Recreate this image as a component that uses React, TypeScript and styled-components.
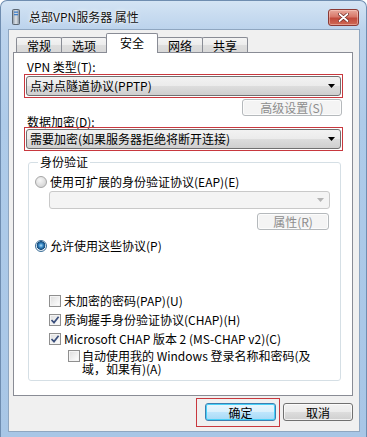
import React from 'react'
import styled, {createGlobalStyle} from 'styled-components'

const GlobalStyle = createGlobalStyle`
    html, body {
        margin: 0;
        padding: 0;
        background: #ffffff;
    }
    body {
        font-family: "Noto Sans CJK SC", "Noto Sans", sans-serif;
        font-size: 12px;
        color: #000000;
    }
`

const Window = styled.div`
    width: 367px;
    height: 437px;
    box-sizing: border-box;
    display: flex;
    flex-direction: column;
    border: 1px solid #6f8db0;
    border-bottom: none;
    border-radius: 7px 7px 0 0;
    background: linear-gradient(180deg, #d4e4f4 0px, #bcd3ec 28px, #aecbe9 120px, #a8c6e6 100%);
    overflow: hidden;
`

const TitleBar = styled.div`
    height: 28px;
    box-sizing: border-box;
    padding: 4px 7px 0 11px;
    display: flex;
    align-items: center;
    flex-shrink: 0;
`

const TitleText = styled.div`
    margin-left: 9px;
    font-size: 12px;
    line-height: 14px;
    color: #111111;
    text-shadow: 0 0 5px rgba(255, 255, 255, 0.95), 0 0 2px rgba(255, 255, 255, 0.9);
`

const CloseButton = styled.div`
    margin-left: auto;
    width: 31px;
    height: 17px;
    box-sizing: border-box;
    border: 1px solid #8a3a35;
    border-radius: 3px;
    background: linear-gradient(180deg, #e9a99c 0%, #d8786a 45%, #c14a3c 55%, #cf6a55 100%);
    display: flex;
    align-items: center;
    justify-content: center;
    box-shadow: inset 0 0 0 1px rgba(255, 220, 210, 0.45);
`

const Client = styled.div`
    flex: 1;
    margin: 0 6px 5px 7px;
    box-sizing: border-box;
    border: 1px solid #8fa6c0;
    background: #f0f0f0;
    padding: 3px 6px 0 4px;
    display: flex;
    flex-direction: column;
`

const TabStrip = styled.div`
    display: flex;
    align-items: flex-end;
    height: 19px;
    padding-left: 3px;
`

const Tab = styled.div<{ $active?: boolean }>`
    box-sizing: border-box;
    width: ${p => (p.$active ? 52 : 46)}px;
    height: ${p => (p.$active ? 20 : 15)}px;
    margin-right: -1px;
    margin-bottom: ${p => (p.$active ? -1 : 0)}px;
    border: 1px solid #898c95;
    border-bottom: none;
    border-radius: 2px 2px 0 0;
    background: ${p => (p.$active
        ? '#ffffff'
        : 'linear-gradient(180deg, #f4f4f4 0%, #ececec 50%, #dedede 51%, #d8d8d8 100%)')};
    display: flex;
    align-items: center;
    justify-content: center;
    padding-bottom: ${p => (p.$active ? 2 : 0)}px;
    line-height: 13px;
    position: relative;
    z-index: ${p => (p.$active ? 2 : 1)};
`

const Panel = styled.div`
    box-sizing: border-box;
    border: 1px solid #898c95;
    background: #ffffff;
    padding: 0 9px 14px 10px;
    display: flex;
    flex-direction: column;
`

const FieldLabel = styled.div<{ $lineHeight: number; $top: number }>`
    margin: ${p => p.$top}px 0 0 3px;
    line-height: ${p => p.$lineHeight}px;
`

const Highlight = styled.div<{ $top: number }>`
    margin-top: ${p => p.$top}px;
    border: 1px solid #c8383e;
    padding: 1px;
`

const Combo = styled.div<{ $disabled?: boolean }>`
    box-sizing: border-box;
    height: ${p => (p.$disabled ? 18 : 20)}px;
    border: 1px solid ${p => (p.$disabled ? '#c9c9c9' : '#707070')};
    border-radius: 3px;
    background: ${p => (p.$disabled
        ? '#f4f4f4'
        : 'linear-gradient(180deg, #f2f2f2 0%, #ebebeb 50%, #dddddd 51%, #cfcfcf 100%)')};
    display: flex;
    align-items: center;
    padding: 0 5px 0 3px;
`

const ComboText = styled.div`
    flex: 1;
    line-height: 14px;
    white-space: nowrap;
`

const ButtonRow = styled.div<{ $top: number }>`
    display: flex;
    justify-content: flex-end;
    margin-top: ${p => p.$top}px;
    padding-right: 1px;
`

const PushButton = styled.div<{ $width: number; $height: number; $disabled?: boolean; $default?: boolean }>`
    box-sizing: border-box;
    width: ${p => p.$width}px;
    height: ${p => p.$height}px;
    border: 1px solid ${p => (p.$disabled ? '#b5b9bc' : p.$default ? '#3c7fb1' : '#707070')};
    border-radius: 3px;
    background: ${p => (p.$disabled
        ? '#f4f4f4'
        : p.$default
            ? 'linear-gradient(180deg, #eaf6fd 0%, #d9f0fc 50%, #bee6fd 51%, #a7d9f5 100%)'
            : 'linear-gradient(180deg, #f2f2f2 0%, #ebebeb 50%, #dddddd 51%, #cfcfcf 100%)')};
    box-shadow: ${p => (p.$default ? 'inset 0 0 0 1px #48d0f8' : 'inset 0 0 0 1px rgba(255,255,255,0.7)')};
    color: ${p => (p.$disabled ? '#8d8d8d' : '#000000')};
    display: flex;
    align-items: center;
    justify-content: center;
    line-height: 13px;
`

const GroupBox = styled.fieldset`
    margin: 4px 2px 0 4px;
    border: 1px solid #d5dfe5;
    border-radius: 3px;
    padding: 0 10px 5px 6px;
    min-width: 0;
`

const Legend = styled.legend`
    padding: 0 2px;
    margin-left: 3px;
    line-height: 14px;
`

const OptionRow = styled.div<{ $top: number; $indent?: number }>`
    display: flex;
    align-items: flex-start;
    margin-top: ${p => p.$top}px;
    margin-left: ${p => p.$indent || 0}px;
`

const OptionText = styled.div<{ $gap: number }>`
    margin-left: ${p => p.$gap}px;
    line-height: 14px;
    white-space: nowrap;
`

const WrapText = styled.div`
    margin-left: 2px;
    line-height: 13px;
    white-space: nowrap;
`

const Radio = styled.div<{ $checked?: boolean }>`
    width: 12px;
    height: 12px;
    margin-top: 1px;
    box-sizing: border-box;
    border-radius: 50%;
    border: 1px solid ${p => (p.$checked ? '#3d6f98' : '#a6a6a6')};
    background: ${p => (p.$checked
        ? 'radial-gradient(circle at 50% 45%, #b6e0f8 0px, #3a8bc8 2px, #13497a 4px, #e6eef5 4.6px, #f4f4f4 100%)'
        : 'radial-gradient(circle at 40% 35%, #f8f8f8 0px, #dcdcdc 60%, #cacaca 100%)')};
    flex-shrink: 0;
`

const CheckBox = styled.div`
    width: 12px;
    height: 12px;
    margin-top: 1px;
    box-sizing: border-box;
    border: 1px solid #8f8f8f;
    background: linear-gradient(135deg, #dcdcdc 0%, #f2f2f2 60%, #ffffff 100%);
    box-shadow: inset 0 0 0 1px #f4f4f4;
    display: flex;
    align-items: center;
    justify-content: center;
    flex-shrink: 0;
`

const Footer = styled.div`
    display: flex;
    justify-content: flex-end;
    align-items: flex-start;
    margin-top: 2px;
`

const FooterMark = styled.div`
    border: 1px solid #c8383e;
    padding: 4px 3px 5px 8px;
    margin-right: 3px;
`

const FooterPlain = styled.div`
    padding-top: 5px;
`

const DropArrow = (props: { color: string }) => (
    <svg width="7" height="4" viewBox="0 0 7 4">
        <polygon points="0,0 7,0 3.5,4" fill={props.color}/>
    </svg>
)

const Check = () => (
    <svg width="10" height="10" viewBox="0 0 10 10">
        <path d="M1.5 5 L4 7.6 L8.6 1.8" fill="none" stroke="#3b4f7c" strokeWidth="1.7"/>
    </svg>
)

const ServerIcon = () => (
    <svg width="8" height="16" viewBox="0 0 8 16">
        <defs>
            <linearGradient id="tower" x1="0" x2="1" y1="0" y2="0">
                <stop offset="0" stopColor="#8c97a3"/>
                <stop offset="0.5" stopColor="#dfe5ea"/>
                <stop offset="1" stopColor="#7d8894"/>
            </linearGradient>
        </defs>
        <rect x="0.5" y="0.5" width="7" height="15" rx="1" fill="url(#tower)" stroke="#5c6772"/>
        <rect x="2" y="2.5" width="4" height="1.3" fill="#3f7fc9"/>
        <rect x="2" y="5" width="4" height="1.3" fill="#3f7fc9"/>
    </svg>
)

const CloseGlyph = () => (
    <svg width="11" height="9" viewBox="0 0 11 9">
        <path d="M1.5 1 L9.5 8 M9.5 1 L1.5 8" stroke="#6b2620" strokeWidth="3.2" strokeLinecap="round"/>
        <path d="M1.5 1 L9.5 8 M9.5 1 L1.5 8" stroke="#ffffff" strokeWidth="1.8" strokeLinecap="round"/>
    </svg>
)

const tabs = ['常规', '选项', '安全', '网络', '共享']

const App = () => {
    return (
        <>
            <GlobalStyle/>
            <Window>
                <TitleBar>
                    <ServerIcon/>
                    <TitleText>总部VPN服务器 属性</TitleText>
                    <CloseButton>
                        <CloseGlyph/>
                    </CloseButton>
                </TitleBar>
                <Client>
                    <TabStrip>
                        {tabs.map(t => (
                            <Tab key={t} $active={t === '安全'}>{t}</Tab>
                        ))}
                    </TabStrip>
                    <Panel>
                        <FieldLabel $top={7} $lineHeight={14}>VPN 类型(T):</FieldLabel>
                        <Highlight $top={0}>
                            <Combo>
                                <ComboText>点对点隧道协议(PPTP)</ComboText>
                                <DropArrow color="#000000"/>
                            </Combo>
                        </Highlight>
                        <ButtonRow $top={1}>
                            <PushButton $width={100} $height={17} $disabled>高级设置(S)</PushButton>
                        </ButtonRow>
                        <FieldLabel $top={0} $lineHeight={12}>数据加密(D):</FieldLabel>
                        <Highlight $top={-1}>
                            <Combo>
                                <ComboText>需要加密(如果服务器拒绝将断开连接)</ComboText>
                                <DropArrow color="#000000"/>
                            </Combo>
                        </Highlight>
                        <GroupBox>
                            <Legend>身份验证</Legend>
                            <OptionRow $top={6}>
                                <Radio/>
                                <OptionText $gap={3}>使用可扩展的身份验证协议(EAP)(E)</OptionText>
                            </OptionRow>
                            <OptionRow $top={2} $indent={14}>
                                <Combo $disabled style={{flex: 1}}>
                                    <ComboText/>
                                    <DropArrow color="#b4b4b4"/>
                                </Combo>
                            </OptionRow>
                            <ButtonRow $top={4}>
                                <PushButton $width={72} $height={17} $disabled>属性(R)</PushButton>
                            </ButtonRow>
                            <OptionRow $top={9}>
                                <Radio $checked/>
                                <OptionText $gap={3}>允许使用这些协议(P)</OptionText>
                            </OptionRow>
                            <OptionRow $top={41} $indent={14}>
                                <CheckBox/>
                                <OptionText $gap={3}>未加密的密码(PAP)(U)</OptionText>
                            </OptionRow>
                            <OptionRow $top={5} $indent={14}>
                                <CheckBox><Check/></CheckBox>
                                <OptionText $gap={3}>质询握手身份验证协议(CHAP)(H)</OptionText>
                            </OptionRow>
                            <OptionRow $top={5} $indent={14}>
                                <CheckBox><Check/></CheckBox>
                                <OptionText $gap={3}>Microsoft CHAP 版本 2 (MS-CHAP v2)(C)</OptionText>
                            </OptionRow>
                            <OptionRow $top={3} $indent={33}>
                                <CheckBox/>
                                <WrapText>
                                    自动使用我的 Windows 登录名称和密码(及<br/>域，如果有)(A)
                                </WrapText>
                            </OptionRow>
                        </GroupBox>
                    </Panel>
                    <Footer>
                        <FooterMark>
                            <PushButton $width={71} $height={18} $default>确定</PushButton>
                        </FooterMark>
                        <FooterPlain>
                            <PushButton $width={70} $height={18}>取消</PushButton>
                        </FooterPlain>
                    </Footer>
                </Client>
            </Window>
        </>
    )
}

export default App
